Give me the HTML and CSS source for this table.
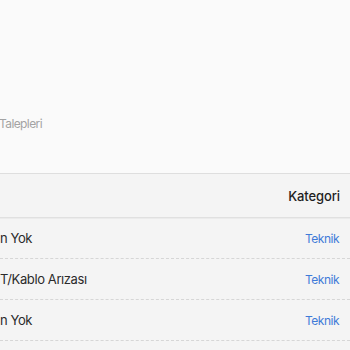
FILE: index.html
```html
<!DOCTYPE html>
<html lang="tr">
<head>
<meta charset="utf-8">
<link rel="stylesheet" href="styles.css">
</head>
<body>
<div class="page">
  <header class="top">
    <p class="subtitle">Talepleri</p>
  </header>
  <section class="table">
    <div class="row head">
      <span class="cell name"></span>
      <span class="cell cat">Kategori</span>
    </div>
    <div class="row">
      <span class="cell name">n Yok</span>
      <span class="cell cat link">Teknik</span>
    </div>
    <div class="row">
      <span class="cell name">T/Kablo Arızası</span>
      <span class="cell cat link">Teknik</span>
    </div>
    <div class="row">
      <span class="cell name">n Yok</span>
      <span class="cell cat link">Teknik</span>
    </div>
    <div class="row"></div>
  </section>
</div>
</body>
</html>
```
FILE: styles.css
```css
* { box-sizing: border-box; }
html, body {
  margin: 0;
  padding: 0;
  background: #fafafa;
  font-family: Inter, "Liberation Sans", sans-serif;
  overflow: hidden;
}
.page {
  width: 350px;
  height: 350px;
  display: flex;
  flex-direction: column;
}
.top {
  height: 173px;
  flex: none;
  display: flex;
  flex-direction: column;
}
.subtitle {
  margin: 116px 0 0 -1px;
  font-size: 12px;
  line-height: 16px;
  letter-spacing: -0.6px;
  color: #a3a3a3;
}
.table {
  flex: 1;
  min-height: 0;
  overflow: hidden;
  background: #f4f4f4;
  border-top: 1px solid #dedede;
}
.row {
  display: flex;
  align-items: center;
  justify-content: space-between;
  height: 41px;
  padding: 0 11px 0 0;
  border-bottom: 1px dashed #d6d6d6;
}
.row.head {
  height: 44px;
  padding-right: 10px;
  border-bottom: 1px solid #e0e0e0;
  box-shadow: 0 1px 0 #ebebeb;
}
.cell.name {
  font-size: 13px;
  letter-spacing: -0.4px;
  color: #2b2b2b;
}
.cell.cat {
  font-size: 13px;
  font-weight: 500;
  letter-spacing: -0.1px;
  color: #1f1f1f;
}
.cell.cat.link {
  font-size: 12px;
  font-weight: 400;
  letter-spacing: -0.5px;
  color: #3f7bd8;
}
```
